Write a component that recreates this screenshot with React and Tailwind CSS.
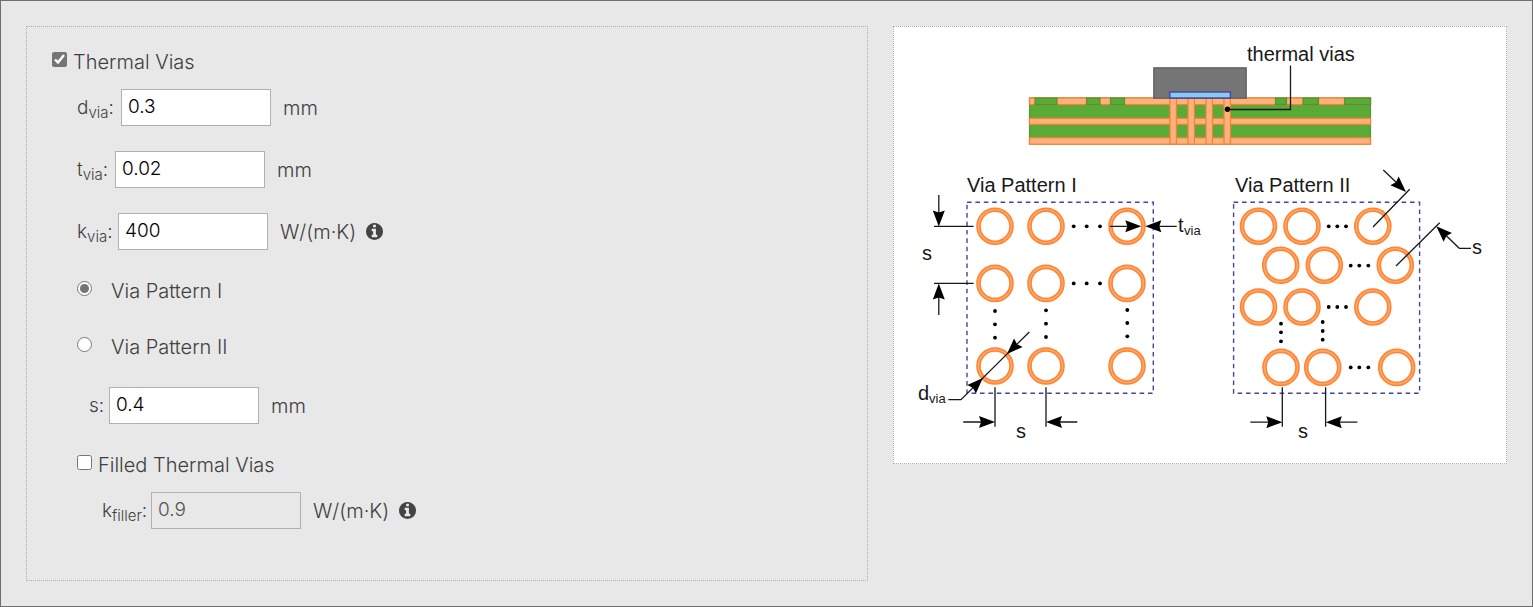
import { useState } from "react";

const ink = "#181818";

function InfoIcon() {
  return (
    <svg viewBox="0 128 1536 1536" className="size-[17px]" fill="currentColor" aria-hidden="true">
      <path d="M1024 1376v-160q0-14-9-23t-23-9h-96v-512q0-14-9-23t-23-9h-320q-14 0-23 9t-9 23v160q0 14 9 23t23 9h96v320h-96q-14 0-23 9t-9 23v160q0 14 9 23t23 9h448q14 0 23-9t9-23zm-128-896v-160q0-14-9-23t-23-9h-192q-14 0-23 9t-9 23v160q0 14 9 23t23 9h192q14 0 23-9t9-23zm640 416q0 209-103 385.5t-279.5 279.5-385.5 103-385.5-103-279.5-279.5-103-385.5 103-385.5 279.5-279.5 385.5-103 385.5 103 279.5 279.5 103 385.5z" />
    </svg>
  );
}

function Label({ id, base, sub, className }) {
  return (
    <label htmlFor={id} className={`shrink-0 pt-0.5 text-[19px] whitespace-nowrap ${className}`}>
      {base}
      {sub && <sub className="text-[15px]">{sub}</sub>}:
    </label>
  );
}

function Field({ id, base, sub, value, unit, info, disabled, indent = "", labelWidth }) {
  const [text, setText] = useState(value);
  return (
    <div className={`flex h-[37px] items-center ${indent}`}>
      <Label id={id} base={base} sub={sub} className={labelWidth} />
      <input
        id={id}
        type="text"
        value={text}
        disabled={disabled}
        onChange={(e) => setText(e.target.value)}
        className="h-full w-[150px] border border-[#b0b0b0] bg-white px-1.5 pb-0.5 text-[19px] text-black disabled:bg-transparent disabled:text-[#545454]"
      />
      <span className="ml-3 whitespace-nowrap">{unit}</span>
      {info && (
        <button type="button" aria-label="More information" className="ml-2.5 text-[#444]">
          <InfoIcon />
        </button>
      )}
    </div>
  );
}

function Choice({ type, name, label, checked, onChange, gap }) {
  return (
    <label className={`flex h-[31px] items-center ${gap}`}>
      <input
        type={type}
        name={name}
        checked={checked}
        onChange={onChange}
        className="mt-1.5 size-[15px] shrink-0 self-start accent-[#757575]"
      />
      <span className="pt-px">{label}</span>
    </label>
  );
}

function Ring({ x, y }) {
  return (
    <g fill="none">
      <circle cx={x} cy={y} r="16.5" stroke="#ff8434" strokeWidth="4.6" />
      <circle cx={x} cy={y} r="16.5" stroke="#ffa668" strokeWidth="1.6" />
    </g>
  );
}

function Head({ x, y, angle }) {
  return (
    <path
      d="M0 0L-16 -6L-14 0L-16 6Z"
      transform={`translate(${x} ${y}) rotate(${angle})`}
      fill="#000"
    />
  );
}

function Dots({ points }) {
  return points.map(([x, y]) => <circle key={`${x}-${y}`} cx={x} cy={y} r="1.9" fill="#000" />);
}

const surfaceMasks = [
  [1035, 22],
  [1086.5, 13.5],
  [1110.5, 14],
  [1275.5, 11],
  [1303, 15.5],
  [1344.5, 26],
];

function Board() {
  return (
    <g strokeWidth="1.2">
      <rect x="1029.5" y="98" width="341" height="46" fill="#5aaa37" stroke="#4f9a3a" />
      <g fill="#ffb280" stroke="#fb7f2c">
        <rect x="1029.5" y="98" width="341" height="6.5" />
        <rect x="1029.5" y="118.3" width="341" height="6" />
        <rect x="1029.5" y="137.8" width="341" height="6.4" />
      </g>
      {surfaceMasks.map(([x, w]) => (
        <rect key={x} x={x} y="98" width={w} height="6.5" fill="#5aaa37" stroke="#5c8f33" />
      ))}
      {[1170, 1188, 1206, 1224].map((x) => (
        <g key={x}>
          <rect x={x} y="98" width="6.4" height="46.2" fill="#ffb280" />
          <path d={`M${x} 98V144.2H${x + 6.4}V98`} fill="none" stroke="#fb7f2c" />
        </g>
      ))}
      <rect x="1153.8" y="67.8" width="92.4" height="30.4" fill="#757575" stroke="#5c5c5c" />
      <rect x="1169.8" y="92" width="60.6" height="6" fill="#8fc8ee" stroke="#3b49a8" strokeWidth="1.4" />
      <path d="M1227.5 109.5H1290.5V65.5" fill="none" stroke={ink} strokeWidth="1.3" />
      <circle cx="1227.5" cy="109.3" r="2.7" fill="#000" />
    </g>
  );
}

function PatternOne() {
  return (
    <g>
      <rect x="967" y="202.3" width="186.3" height="191" fill="none" stroke="#45459f" strokeWidth="1.4" strokeDasharray="4.6 3.8" />
      {[226.3, 283.4, 366].map((y) => [995, 1046, 1127].map((x) => <Ring key={`${x}-${y}`} x={x} y={y} />))}
      <Dots
        points={[
          [1073.7, 226.3], [1086.7, 226.3], [1100, 226.3],
          [1073.7, 283.4], [1086.7, 283.4], [1100, 283.4],
          [995, 311], [995, 324.3], [995, 337.7],
          [1046, 310.3], [1046, 323.7], [1046, 337],
          [1127.3, 310], [1127.3, 323], [1127.3, 336.3],
        ]}
      />
      <g fill="none" stroke={ink} strokeWidth="1.3">
        <path d="M934 226.4H973.6M938.8 195V215M934 283.4H973.6M938.8 315V295" />
        <path d="M1110 226.3H1130M1156 226.3H1176.7" />
        <path d="M948.3 399.7H961L1029.3 332" />
        <path d="M995 387.3V426.7M1046 387.3V426.7M963.3 422H984M1057 422H1077.3" />
      </g>
      <Head x={938.8} y={226.6} angle={90} />
      <Head x={938.8} y={283.6} angle={-90} />
      <Head x={1141.3} y={226.3} angle={0} />
      <Head x={1145.3} y={226.3} angle={180} />
      <Head x={1007} y={354} angle={135} />
      <Head x={982.9} y={378} angle={-45} />
      <Head x={995} y={422} angle={0} />
      <Head x={1046} y={422} angle={180} />
    </g>
  );
}

function PatternTwo() {
  const rings = [
    [1258.5, 226.3], [1302, 226.3], [1372.8, 226.3],
    [1280.7, 265.3], [1324.3, 265.3], [1395.3, 265.3],
    [1258.5, 307], [1302, 307], [1372.8, 307],
    [1281, 367.4], [1322.7, 367.4], [1396.7, 367.4],
  ];
  return (
    <g>
      <rect x="1233.6" y="202.3" width="186" height="191" fill="none" stroke="#45459f" strokeWidth="1.4" strokeDasharray="4.6 3.8" />
      {rings.map(([x, y]) => <Ring key={`${x}-${y}`} x={x} y={y} />)}
      <Dots
        points={[
          [1328.7, 226.3], [1337.3, 226.3], [1346, 226.3],
          [1350.7, 265.6], [1359.3, 265.6], [1368.3, 265.6],
          [1328.7, 307], [1337.3, 307], [1346, 307],
          [1350.7, 367.4], [1359.3, 367.4], [1368.3, 367.4],
          [1281, 323.7], [1281, 332.3], [1281, 341.3],
          [1322.7, 322], [1322.7, 331], [1322.7, 339.7],
        ]}
      />
      <g fill="none" stroke={ink} strokeWidth="1.3">
        <path d="M1373 227L1409.7 189.3M1396 266L1439.7 222.7" />
        <path d="M1383.3 170L1398 184M1445 234.5L1459.3 248.3H1471" />
        <path d="M1282.3 387.3V426.7M1325.6 387.3V426.7M1250.3 422.2H1271M1337 422.2H1357.3" />
      </g>
      <Head x={1406} y={192} angle={44} />
      <Head x={1436.3} y={226.3} angle={-136} />
      <Head x={1282.3} y={422.2} angle={0} />
      <Head x={1325.8} y={422.2} angle={180} />
    </g>
  );
}

function ViaDiagram() {
  return (
    <svg viewBox="894 27 612 436" role="img" aria-label="Thermal via patterns" className="block w-full">
      <Board />
      <PatternOne />
      <PatternTwo />
      <g fill={ink} fontSize="20" fontFamily="'Liberation Sans', Arial, sans-serif">
        <text x="1247" y="61">thermal vias</text>
        <text x="967" y="192">Via Pattern I</text>
        <text x="1235" y="192">Via Pattern II</text>
        <text x="922" y="260">s</text>
        <text x="1178" y="232">t</text>
        <text x="1184" y="235" fontSize="13">via</text>
        <text x="918" y="400">d</text>
        <text x="929" y="403" fontSize="13">via</text>
        <text x="1016" y="438">s</text>
        <text x="1298" y="438">s</text>
        <text x="1472" y="254">s</text>
      </g>
    </svg>
  );
}

export default function App() {
  const [vias, setVias] = useState(true);
  const [pattern, setPattern] = useState(1);
  const [filled, setFilled] = useState(false);

  return (
    <main className="grid min-h-screen grid-cols-[842fr_614fr] gap-[25px] border border-[#6f6d6e] bg-[#e8e8e8] p-[25px] font-['Inter',sans-serif] text-[20px] font-light text-[#404040]">
      <form className="border border-dotted border-[#b0b0b0] px-[25px] pt-[19px] pb-[25px]">
        <Choice type="checkbox" label="Thermal Vias" gap="gap-1.5" checked={vias} onChange={() => setVias(!vias)} />
        <div className="mt-3 flex flex-col gap-[25px] pl-[25px]">
          <Field id="d-via" base="d" sub="via" value="0.3" unit="mm" labelWidth="w-11" />
          <Field id="t-via" base="t" sub="via" value="0.02" unit="mm" labelWidth="w-[38px]" />
          <Field id="k-via" base="k" sub="via" value="400" unit="W/(m·K)" info labelWidth="w-[41px]" />
          <Choice type="radio" name="pattern" label="Via Pattern I" gap="gap-[19px]" checked={pattern === 1} onChange={() => setPattern(1)} />
          <Choice type="radio" name="pattern" label="Via Pattern II" gap="gap-[19px]" checked={pattern === 2} onChange={() => setPattern(2)} />
          <Field id="spacing" base="s" value="0.4" unit="mm" indent="pl-3" labelWidth="w-5" />
          <div className="flex flex-col gap-3">
            <Choice type="checkbox" label="Filled Thermal Vias" gap="gap-1.5" checked={filled} onChange={() => setFilled(!filled)} />
            <Field id="k-filler" base="k" sub="filler" value="0.9" unit="W/(m·K)" info disabled={!filled} indent="pl-[25px]" labelWidth="w-[49px]" />
          </div>
        </div>
      </form>
      <figure className="self-start border border-dotted border-[#b0b0b0] bg-white">
        <ViaDiagram />
      </figure>
    </main>
  );
}
